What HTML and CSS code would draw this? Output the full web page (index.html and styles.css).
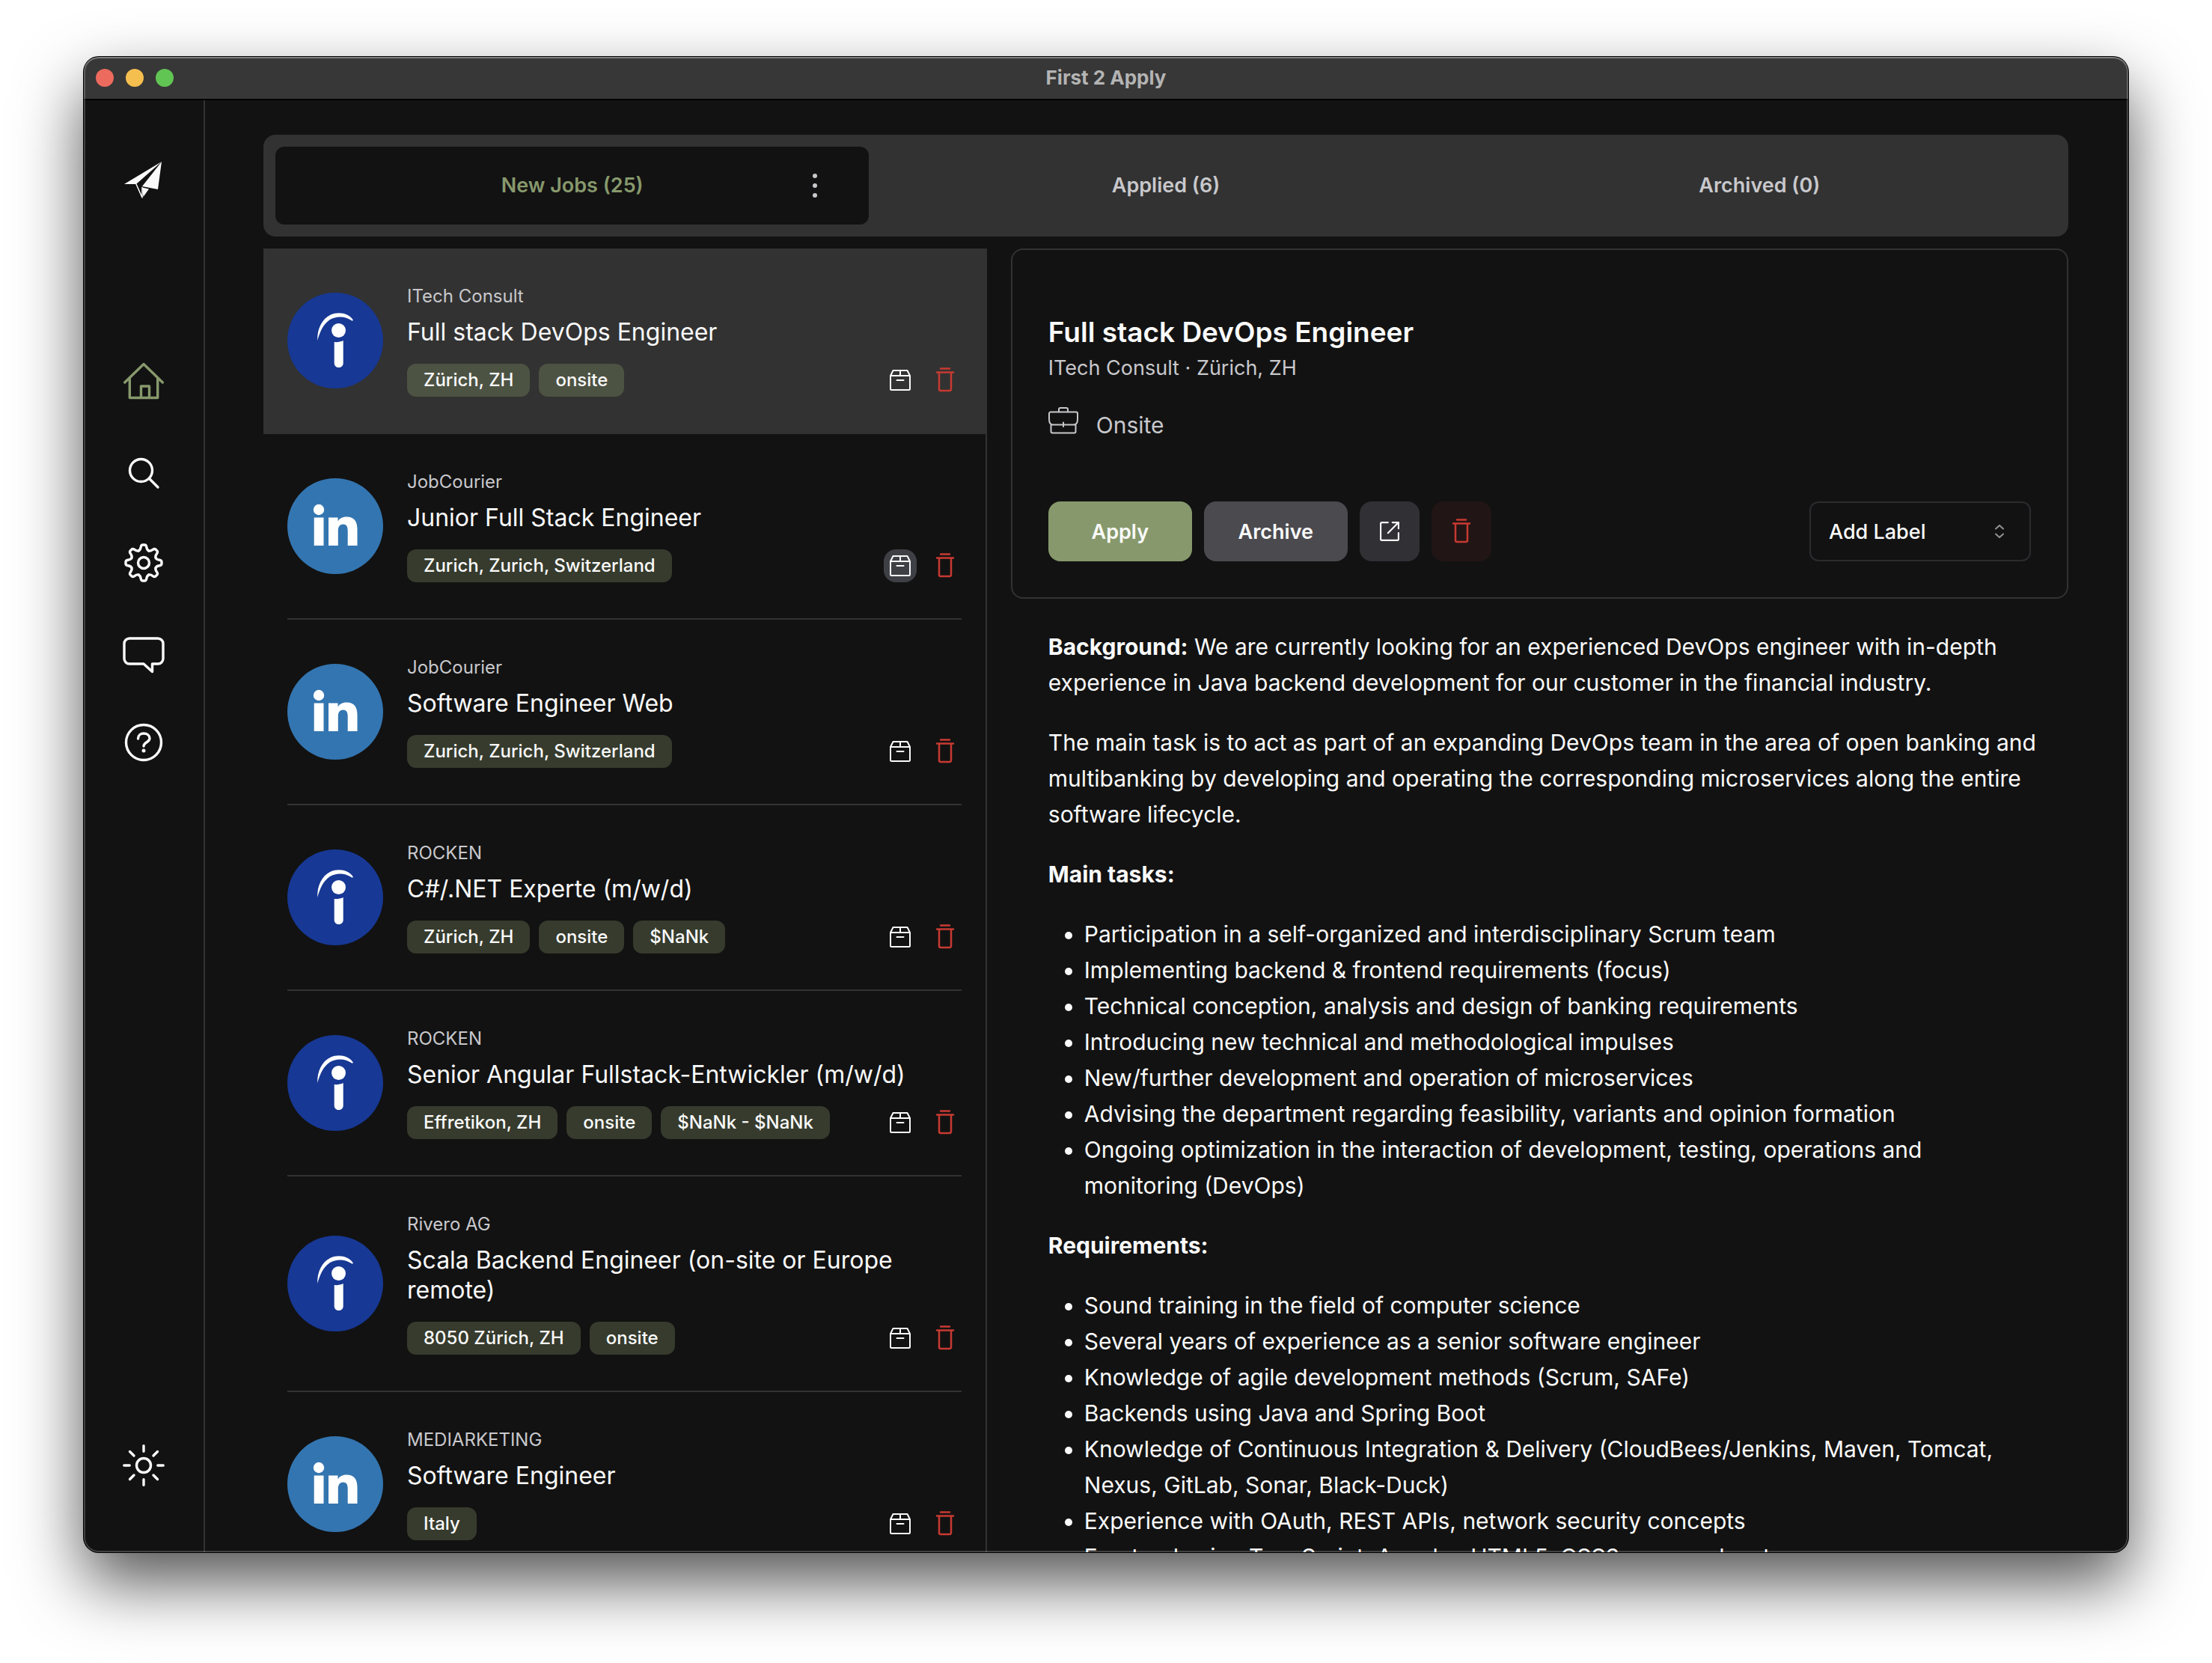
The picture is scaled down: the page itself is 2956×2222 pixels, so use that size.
FILE: index.html
```html
<!DOCTYPE html>
<html lang="en">
<head>
<meta charset="utf-8">
<title>First 2 Apply</title>
<link rel="stylesheet" href="styles.css">
</head>
<body>
<svg class="sprite" aria-hidden="true">
  <symbol id="archive" viewBox="0 0 28 28"><path d="M1 8 4.500 1h19L27 8v17.500a1.500 1.500 0 0 1-1.500 1.500h-23A1.500 1.500 0 0 1 1 25.500zM1 8h26M14 1v7M9.500 14h9"/></symbol>
  <symbol id="trash" viewBox="0 0 28 34"><path d="M8 1.500h12M3 6.500h22M6 6.500v22.500a2 2 0 0 0 2 2h12a2 2 0 0 0 2-2V6.500"/></symbol>
  <symbol id="indeed" viewBox="0 0 128 128"><circle cx="64" cy="64" r="64" fill="#173894"/><circle cx="68.500" cy="50.500" r="9.500" fill="#fff"/><path fill="#fff" d="M62.700 66c4 .500 8.500-.300 12-2v30c0 8-12 8-12 0z"/><path fill="#fff" d="M40.300 64C39.500 49 46 35 58 29.500c11-4.800 24-1.500 29.500 6.500.600 1-.100 2-1.200 1.500C78 31.500 66 30.500 57 36 48 42 43.500 52 40.300 64z"/></symbol>
  <symbol id="linkedin" viewBox="0 0 128 128"><circle cx="64" cy="64" r="64" fill="#3375b0"/><circle cx="42" cy="42" r="7.200" fill="#fff"/><path fill="#fff" d="M35.700 52.500H48.500V90H35.700zM55 52.500h12.500v5c2-3.500 6-6 11.500-6C90 51.500 93.500 58.500 93.500 69v21H80.700V70.500c0-5-1-9-6.200-9-5 0-6.700 4-6.700 9V90H55z"/></symbol>
</svg>

<div class="window">
  <header class="titlebar">
    <div class="lights"><span class="light red"></span><span class="light yellow"></span><span class="light green"></span></div>
    <span class="window-title">First 2 Apply</span>
  </header>

  <div class="app">
    <nav class="sidebar" aria-label="Main">
      <a href="#" class="logo" aria-label="First 2 Apply"><svg viewBox="0 0 56 56"><path d="M2 34 52 4 18 34z"/><path d="M52 4 47 41 26 37z"/><path d="M26 38.500 35 40.500 27.500 51z"/><path class="fold" d="M18 34 26 52V38.500"/></svg></a>
      <div class="links">
        <a href="#" class="active" aria-label="Home"><svg viewBox="0 0 56 56"><path d="M2.700 27 28 2.500 53.300 27M9.300 21.500V47.500h37.400v-26M24.500 47.500v-15.500h11v15.500"/></svg></a>
        <a href="#" aria-label="Search"><svg viewBox="0 0 56 56"><circle cx="24.500" cy="24.500" r="15"/><path d="M35.500 35.500 47 47"/></svg></a>
        <a href="#" aria-label="Settings"><svg viewBox="-28 -28 56 56"><g id="tooth2"><g id="tooth"><path id="t" d="M-6.700-16.100C-4.600-17-4.200-18.500-3.800-21Q-3.300-24-1.200-24H1.200Q3.300-24 3.800-21C4.200-18.500 4.600-17 6.700-16.100"/><use href="#t" transform="rotate(45)"/></g><use href="#tooth" transform="rotate(90)"/></g><use href="#tooth2" transform="rotate(180)"/><circle r="7.500"/></svg></a>
        <a href="#" aria-label="Feedback"><svg viewBox="0 0 56 56"><path d="M9 9h38a7 7 0 0 1 7 7v20a7 7 0 0 1-7 7h-7.500v10.500L28 43H9a7 7 0 0 1-7-7V16a7 7 0 0 1 7-7z"/></svg></a>
        <a href="#" aria-label="Help"><svg viewBox="0 0 56 56"><circle cx="28" cy="28" r="23.500"/><path d="M20.500 23c0-4.500 3.500-7 7.500-7 4.500 0 8 2.500 8 6.500 0 5.500-8 5-8 10.500"/><circle class="dot" cx="28" cy="39" r="2.500"/></svg></a>
      </div>
      <button class="theme" aria-label="Toggle theme"><svg viewBox="0 0 56 56"><circle cx="28" cy="28" r="9.500"/><path d="M28 1.800v7.400M28 46.800v7.400M1.800 28h7.400M46.800 28h7.400M9.500 9.500l5.500 5.500M41 41l5.500 5.500M46.500 9.500 41 15M15 41l-5.500 5.500"/></svg></button>
    </nav>

    <main class="main">
      <div class="tabs">
        <div class="tab selected"><button class="tab-label">New Jobs (25)</button><button class="kebab" aria-label="More"><svg viewBox="0 0 6 34"><circle cx="3" cy="4" r="3"/><circle cx="3" cy="17" r="3"/><circle cx="3" cy="30" r="3"/></svg></button></div>
        <div class="tab"><button class="tab-label">Applied (6)</button></div>
        <div class="tab"><button class="tab-label">Archived (0)</button></div>
      </div>

      <div class="columns">
        <ul class="jobs">
          <li class="job current"><div class="job-body"><svg class="site"><use href="#indeed"/></svg><div class="job-text"><p class="company">ITech Consult</p><h3 class="job-title">Full stack DevOps Engineer</h3><div class="job-foot"><span class="badge">Zürich, ZH</span><span class="badge">onsite</span><div class="job-actions"><button aria-label="Archive"><svg class="i-archive"><use href="#archive"/></svg></button><button aria-label="Delete"><svg class="i-trash"><use href="#trash"/></svg></button></div></div></div></div></li>
          <li class="job"><div class="job-body"><svg class="site"><use href="#linkedin"/></svg><div class="job-text"><p class="company">JobCourier</p><h3 class="job-title">Junior Full Stack Engineer</h3><div class="job-foot"><span class="badge">Zurich, Zurich, Switzerland</span><div class="job-actions"><button class="hovered" aria-label="Archive"><svg class="i-archive"><use href="#archive"/></svg></button><button aria-label="Delete"><svg class="i-trash"><use href="#trash"/></svg></button></div></div></div></div></li>
          <li class="job"><div class="job-body"><svg class="site"><use href="#linkedin"/></svg><div class="job-text"><p class="company">JobCourier</p><h3 class="job-title">Software Engineer Web</h3><div class="job-foot"><span class="badge">Zurich, Zurich, Switzerland</span><div class="job-actions"><button aria-label="Archive"><svg class="i-archive"><use href="#archive"/></svg></button><button aria-label="Delete"><svg class="i-trash"><use href="#trash"/></svg></button></div></div></div></div></li>
          <li class="job"><div class="job-body"><svg class="site"><use href="#indeed"/></svg><div class="job-text"><p class="company">ROCKEN</p><h3 class="job-title">C#/.NET Experte (m/w/d)</h3><div class="job-foot"><span class="badge">Zürich, ZH</span><span class="badge">onsite</span><span class="badge">$NaNk</span><div class="job-actions"><button aria-label="Archive"><svg class="i-archive"><use href="#archive"/></svg></button><button aria-label="Delete"><svg class="i-trash"><use href="#trash"/></svg></button></div></div></div></div></li>
          <li class="job"><div class="job-body"><svg class="site"><use href="#indeed"/></svg><div class="job-text"><p class="company">ROCKEN</p><h3 class="job-title">Senior Angular Fullstack-Entwickler (m/w/d)</h3><div class="job-foot"><span class="badge">Effretikon, ZH</span><span class="badge">onsite</span><span class="badge">$NaNk - $NaNk</span><div class="job-actions"><button aria-label="Archive"><svg class="i-archive"><use href="#archive"/></svg></button><button aria-label="Delete"><svg class="i-trash"><use href="#trash"/></svg></button></div></div></div></div></li>
          <li class="job"><div class="job-body"><svg class="site"><use href="#indeed"/></svg><div class="job-text"><p class="company">Rivero AG</p><h3 class="job-title">Scala Backend Engineer (on-site or Europe remote)</h3><div class="job-foot"><span class="badge">8050 Zürich, ZH</span><span class="badge">onsite</span><div class="job-actions"><button aria-label="Archive"><svg class="i-archive"><use href="#archive"/></svg></button><button aria-label="Delete"><svg class="i-trash"><use href="#trash"/></svg></button></div></div></div></div></li>
          <li class="job"><div class="job-body"><svg class="site"><use href="#linkedin"/></svg><div class="job-text"><p class="company">MEDIARKETING</p><h3 class="job-title">Software Engineer</h3><div class="job-foot"><span class="badge">Italy</span><div class="job-actions"><button aria-label="Archive"><svg class="i-archive"><use href="#archive"/></svg></button><button aria-label="Delete"><svg class="i-trash"><use href="#trash"/></svg></button></div></div></div></div></li>
        </ul>

        <article class="details">
          <section class="card">
            <h1 class="card-title">Full stack DevOps Engineer</h1>
            <p class="card-sub">ITech Consult · Zürich, ZH</p>
            <p class="card-type"><svg viewBox="0 0 40 36"><path d="M14 6V3a2 2 0 0 1 2-2h8a2 2 0 0 1 2 2v3M3 6.500h34a2 2 0 0 1 2 2V16c0 4-1.500 7.500-5 7.500H6C2.500 23.500 1 20 1 16V8.500a2 2 0 0 1 2-2zM3.500 23v9.500a2 2 0 0 0 2 2h29a2 2 0 0 0 2-2V23M20 20.500v5.500"/></svg>Onsite</p>
            <div class="card-actions">
              <button class="btn apply">Apply</button>
              <button class="btn archive">Archive</button>
              <button class="btn icon open" aria-label="Open in browser"><svg viewBox="0 0 24 24"><path d="M10 1H2.500A1.500 1.500 0 0 0 1 2.500v19A1.500 1.500 0 0 0 2.500 23h19a1.500 1.500 0 0 0 1.500-1.500V14M15.500 1H23v7.500M23 1 10 14"/></svg></button>
              <button class="btn icon delete" aria-label="Delete"><svg class="i-trash"><use href="#trash"/></svg></button>
              <div class="label-picker">
                <select aria-label="Add Label"><option>Add Label</option></select>
                <svg viewBox="0 0 14 20"><path d="M2 6.500 7 2l5 4.500M2 13.500 7 18l5-4.500"/></svg>
              </div>
            </div>
          </section>

          <section class="description">
            <p><strong>Background:</strong> We are currently looking for an experienced DevOps engineer with in-depth experience in Java backend development for our customer in the financial industry.</p>
            <p>The main task is to act as part of an expanding DevOps team in the area of open banking and multibanking by developing and operating the corresponding microservices along the entire software lifecycle.</p>
            <p><strong>Main tasks:</strong></p>
            <ul>
              <li>Participation in a self-organized and interdisciplinary Scrum team</li>
              <li>Implementing backend &amp; frontend requirements (focus)</li>
              <li>Technical conception, analysis and design of banking requirements</li>
              <li>Introducing new technical and methodological impulses</li>
              <li>New/further development and operation of microservices</li>
              <li>Advising the department regarding feasibility, variants and opinion formation</li>
              <li>Ongoing optimization in the interaction of development, testing, operations and monitoring (DevOps)</li>
            </ul>
            <p><strong>Requirements:</strong></p>
            <ul>
              <li>Sound training in the field of computer science</li>
              <li>Several years of experience as a senior software engineer</li>
              <li>Knowledge of agile development methods (Scrum, SAFe)</li>
              <li>Backends using Java and Spring Boot</li>
              <li>Knowledge of Continuous Integration &amp; Delivery (CloudBees/Jenkins, Maven, Tomcat, Nexus, GitLab, Sonar, Black-Duck)</li>
              <li>Experience with OAuth, REST APIs, network security concepts</li>
              <li>Frontend using TypeScript, Angular, HTML5, CSS3 are an advantage</li>
            </ul>
          </section>
        </article>
      </div>
    </main>
  </div>
</div>
</body>
</html>
```
FILE: styles.css
```css
:root {
  --bg: #121212;
  --surface: #323232;
  --line: #323232;
  --text: #fafafa;
  --muted: #c8c8cc;
  --green: #87996c;
  --red: #c73a32;
}

* { box-sizing: border-box; margin: 0; padding: 0; }

body {
  height: 100vh;
  padding: 76px 112px 148px;
  background: #fff;
  color: var(--text);
  font-family: Inter, "Liberation Sans", sans-serif;
  overflow: hidden;
}

button, select {
  border: 0;
  background: none;
  color: inherit;
  font: inherit;
}

svg { display: block; fill: none; stroke-linecap: round; stroke-linejoin: round; }
ul { list-style: none; }
.sprite { position: absolute; width: 0; height: 0; }

/* Window frame */
.window {
  position: relative;
  display: flex;
  flex-direction: column;
  height: 100%;
  overflow: hidden;
  border-radius: 20px;
  background: var(--bg);
  box-shadow: 0 0 0 1px #000, 0 40px 88px rgba(0, 0, 0, .68);
}

.window::after {
  content: "";
  position: absolute;
  inset: 0;
  border-radius: 20px;
  box-shadow: inset 0 0 0 2px rgba(255, 255, 255, .2), inset 0 2px 0 rgba(255, 255, 255, .2);
  pointer-events: none;
}

.titlebar {
  display: grid;
  grid-template-columns: 1fr auto 1fr;
  align-items: center;
  flex: none;
  height: 58px;
  padding: 0 16px;
  border-bottom: 2px solid #000;
  background: #373737;
}

.lights { display: flex; gap: 16px; }
.light { width: 24px; height: 24px; border-radius: 50%; }
.red { background: #ed6a5e; }
.yellow { background: #f5bf4f; }
.green { background: #61c554; }
.window-title { color: #b4b4b4; font-size: 26px; font-weight: 700; line-height: 32px; }

.app { display: flex; flex: 1; min-height: 0; }

/* Sidebar */
.sidebar {
  display: flex;
  flex-direction: column;
  align-items: center;
  flex: 0 0 162px;
  padding: 78px 0 88px;
  border-right: 2px solid var(--line);
}

.sidebar svg { width: 56px; height: 56px; stroke: currentColor; stroke-width: 3.4; }
.sidebar .logo svg { fill: currentColor; stroke: none; }
.sidebar .logo .fold { fill: none; stroke: currentColor; stroke-width: 1.5; }
.sidebar a { color: inherit; }
.sidebar a.active { color: var(--green); }
.sidebar .dot { fill: currentColor; stroke: none; }
.links { display: flex; flex-direction: column; gap: 64px; margin-top: 216px; }
.theme { margin-top: auto; }

/* Content */
.main {
  display: flex;
  flex-direction: column;
  flex: 1;
  gap: 16px;
  min-width: 0;
  padding: 46px 80px 0 78px;
}

.tabs {
  display: grid;
  grid-template-columns: repeat(3, 1fr);
  flex: none;
  padding: 16px;
  border-radius: 16px;
  background: var(--surface);
}

.tab {
  display: grid;
  grid-template-columns: 1fr auto 1fr;
  align-items: center;
  height: 104px;
  border-radius: 12px;
  color: var(--muted);
  font-size: 27px;
  font-weight: 600;
  line-height: 40px;
}

.tab.selected { background: var(--bg); }
.tab-label { grid-column: 2; }
.selected .tab-label { color: var(--green); }
.kebab { display: grid; place-items: center; justify-self: end; width: 44px; height: 44px; margin-right: 50px; }
.kebab svg { width: 6px; height: 34px; fill: currentColor; }

.columns { display: flex; flex: 1; gap: 32px; min-height: 0; }

/* Job list */
.jobs {
  flex: 0 0 40%;
  box-sizing: content-box;
  overflow: hidden;
  border-right: 2px solid var(--line);
}

.job { padding: 0 32px; }
.job-body {
  display: flex;
  align-items: center;
  gap: 32px;
  padding: 48px 0;
  border-bottom: 2px solid var(--line);
}
.job.current { background: var(--surface); }
.site { flex: none; width: 128px; height: 128px; }
.job-text { flex: 1; min-width: 0; }
.company { color: var(--muted); font-size: 24px; line-height: 32px; }
.job-title { margin: 12px 0 22px; font-size: 32px; font-weight: 400; line-height: 40px; }
.job-foot { display: flex; align-items: center; gap: 12px; }
.badge {
  padding: 6px 22px;
  border-radius: 12px;
  background: #363b2d;
  font-size: 24px;
  font-weight: 500;
  line-height: 32px;
}
.current .badge { background: #4d5343; }
.job-actions { display: flex; gap: 16px; margin-left: auto; }
.job-actions button { display: grid; place-items: center; width: 44px; height: 44px; border-radius: 16px; }
.job-actions .hovered { background: #3f3f46; }
.i-archive { width: 28px; height: 28px; stroke: var(--text); stroke-width: 2; }
.i-trash { width: 28px; height: 34px; stroke: var(--red); stroke-width: 2.5; }

/* Job details */
.details { flex: 1; min-width: 0; overflow: hidden; }
.card { padding: 86px 48px 48px; border: 2px solid var(--line); border-radius: 16px; }
.card-title { font-size: 37px; font-weight: 600; line-height: 48px; }
.card-sub { margin-top: 4px; color: var(--muted); font-size: 27px; line-height: 40px; }
.card-type {
  display: flex;
  align-items: flex-start;
  gap: 24px;
  margin-top: 32px;
  color: var(--muted);
  font-size: 30px;
  line-height: 48px;
}
.card-type svg { width: 40px; height: 36px; stroke: currentColor; stroke-width: 2; }

.card-actions { display: flex; gap: 16px; margin-top: 78px; font-size: 27px; font-weight: 600; }
.btn { display: grid; place-items: center; width: 192px; height: 80px; border-radius: 16px; }
.btn.icon { width: 80px; }
.apply { background: var(--green); }
.archive { background: #4b4a4f; }
.open { background: #303035; }
.open svg { width: 26px; height: 26px; stroke: var(--text); stroke-width: 2; }
.delete { background: #221515; }

.label-picker { position: relative; width: 296px; margin-left: auto; font-weight: 500; }
.label-picker select {
  width: 100%;
  height: 80px;
  padding: 0 24px;
  border: 2px solid #2c2c30;
  border-radius: 12px;
  appearance: none;
}
.label-picker svg {
  position: absolute;
  top: 30px;
  right: 35px;
  width: 14px;
  height: 20px;
  stroke: #929292;
  stroke-width: 2;
  pointer-events: none;
}

.description { padding: 40px 40px 0 50px; font-size: 30px; line-height: 48px; }
.description p, .description ul { margin-bottom: 32px; }
.description ul { padding-left: 48px; list-style: disc; }
.description strong { font-weight: 700; }
```
